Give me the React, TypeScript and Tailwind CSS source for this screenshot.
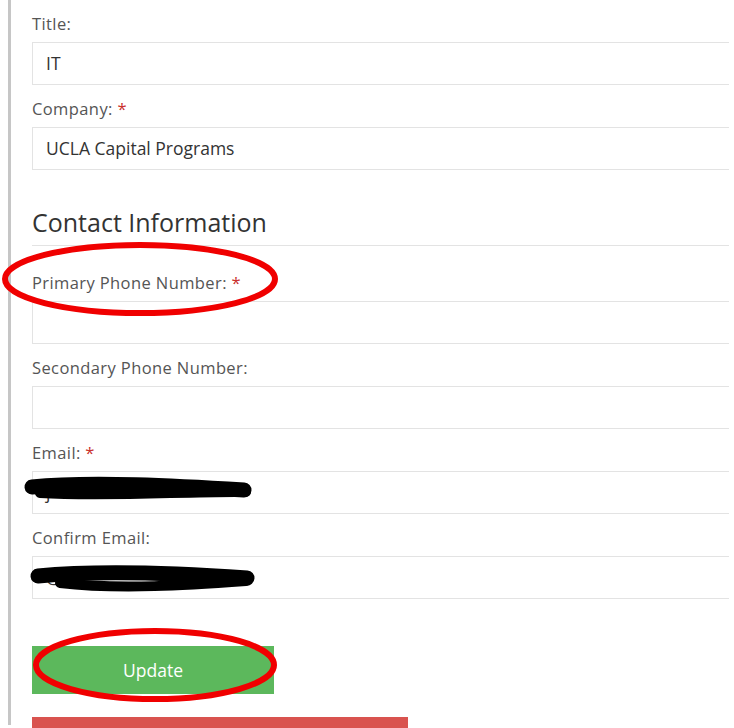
import React from 'react';

const font = { fontFamily: '"Open Sans", "Noto Sans", Arial, sans-serif' };

function Field({ label, required, value, top }: { label: string; required?: boolean; value?: string; top?: string }) {
  return (
    <div className={`flex flex-col ${top ?? ''}`}>
      <label className="text-[16.5px] leading-[20px] tracking-[0.4px] text-[#555]">
        {label}
        {required && <span className="text-[#c9302c]"> *</span>}
      </label>
      <div className="mt-[8px] h-[43px] w-[697px] border border-r-0 border-[#e3e3e3] flex items-center px-[13px] text-[17.5px] text-[#333]">
        {value}
      </div>
    </div>
  );
}

export default function App() {
  return (
    <div className="relative w-[734px] h-[728px] bg-white overflow-hidden" style={font}>
      <div className="ml-[8px] h-[725px] border-l-[3px] border-[#c6c6c6] pl-[21px] pt-[14px]">
        <Field label="Title:" value="IT" />
        <Field label="Company:" required value="UCLA Capital Programs" top="mt-[14px]" />

        <h3 className="mt-[37px] text-[25px] leading-[30px] text-[#333]">Contact Information</h3>
        <div className="mt-[8px] w-[697px] border-t border-[#e3e3e3]" />

        <Field label="Primary Phone Number:" required top="mt-[27px]" />
        <Field label="Secondary Phone Number:" top="mt-[14px]" />
        <Field label="Email:" required value="j" top="mt-[14px]" />
        <Field label="Confirm Email:" value="@" top="mt-[14px]" />

        <button className="mt-[47px] w-[242px] h-[48px] bg-[#5cb85c] text-white text-[17.5px] block">Update</button>
        <div className="mt-[23px] w-[376px] h-[12px] bg-[#d9534f]" />
      </div>

      <svg className="absolute left-0 top-0 pointer-events-none" width="734" height="728">
        <ellipse cx="140" cy="279" rx="135" ry="34" fill="none" stroke="#f00000" strokeWidth="6" />
        <ellipse cx="155" cy="665" rx="119" ry="34" fill="none" stroke="#f00000" strokeWidth="6" />
        <path d="M32 487 C 90 481, 180 486, 244 490" stroke="#000" strokeWidth="15" strokeLinecap="round" fill="none" />
        <path d="M40 493 C 110 497, 190 491, 246 492" stroke="#000" strokeWidth="10" strokeLinecap="round" fill="none" />
        <path d="M38 576 C 100 570, 190 574, 247 578" stroke="#000" strokeWidth="15" strokeLinecap="round" fill="none" />
        <path d="M60 583 C 120 590, 190 585, 246 581" stroke="#000" strokeWidth="10" strokeLinecap="round" fill="none" />
      </svg>
    </div>
  );
}
